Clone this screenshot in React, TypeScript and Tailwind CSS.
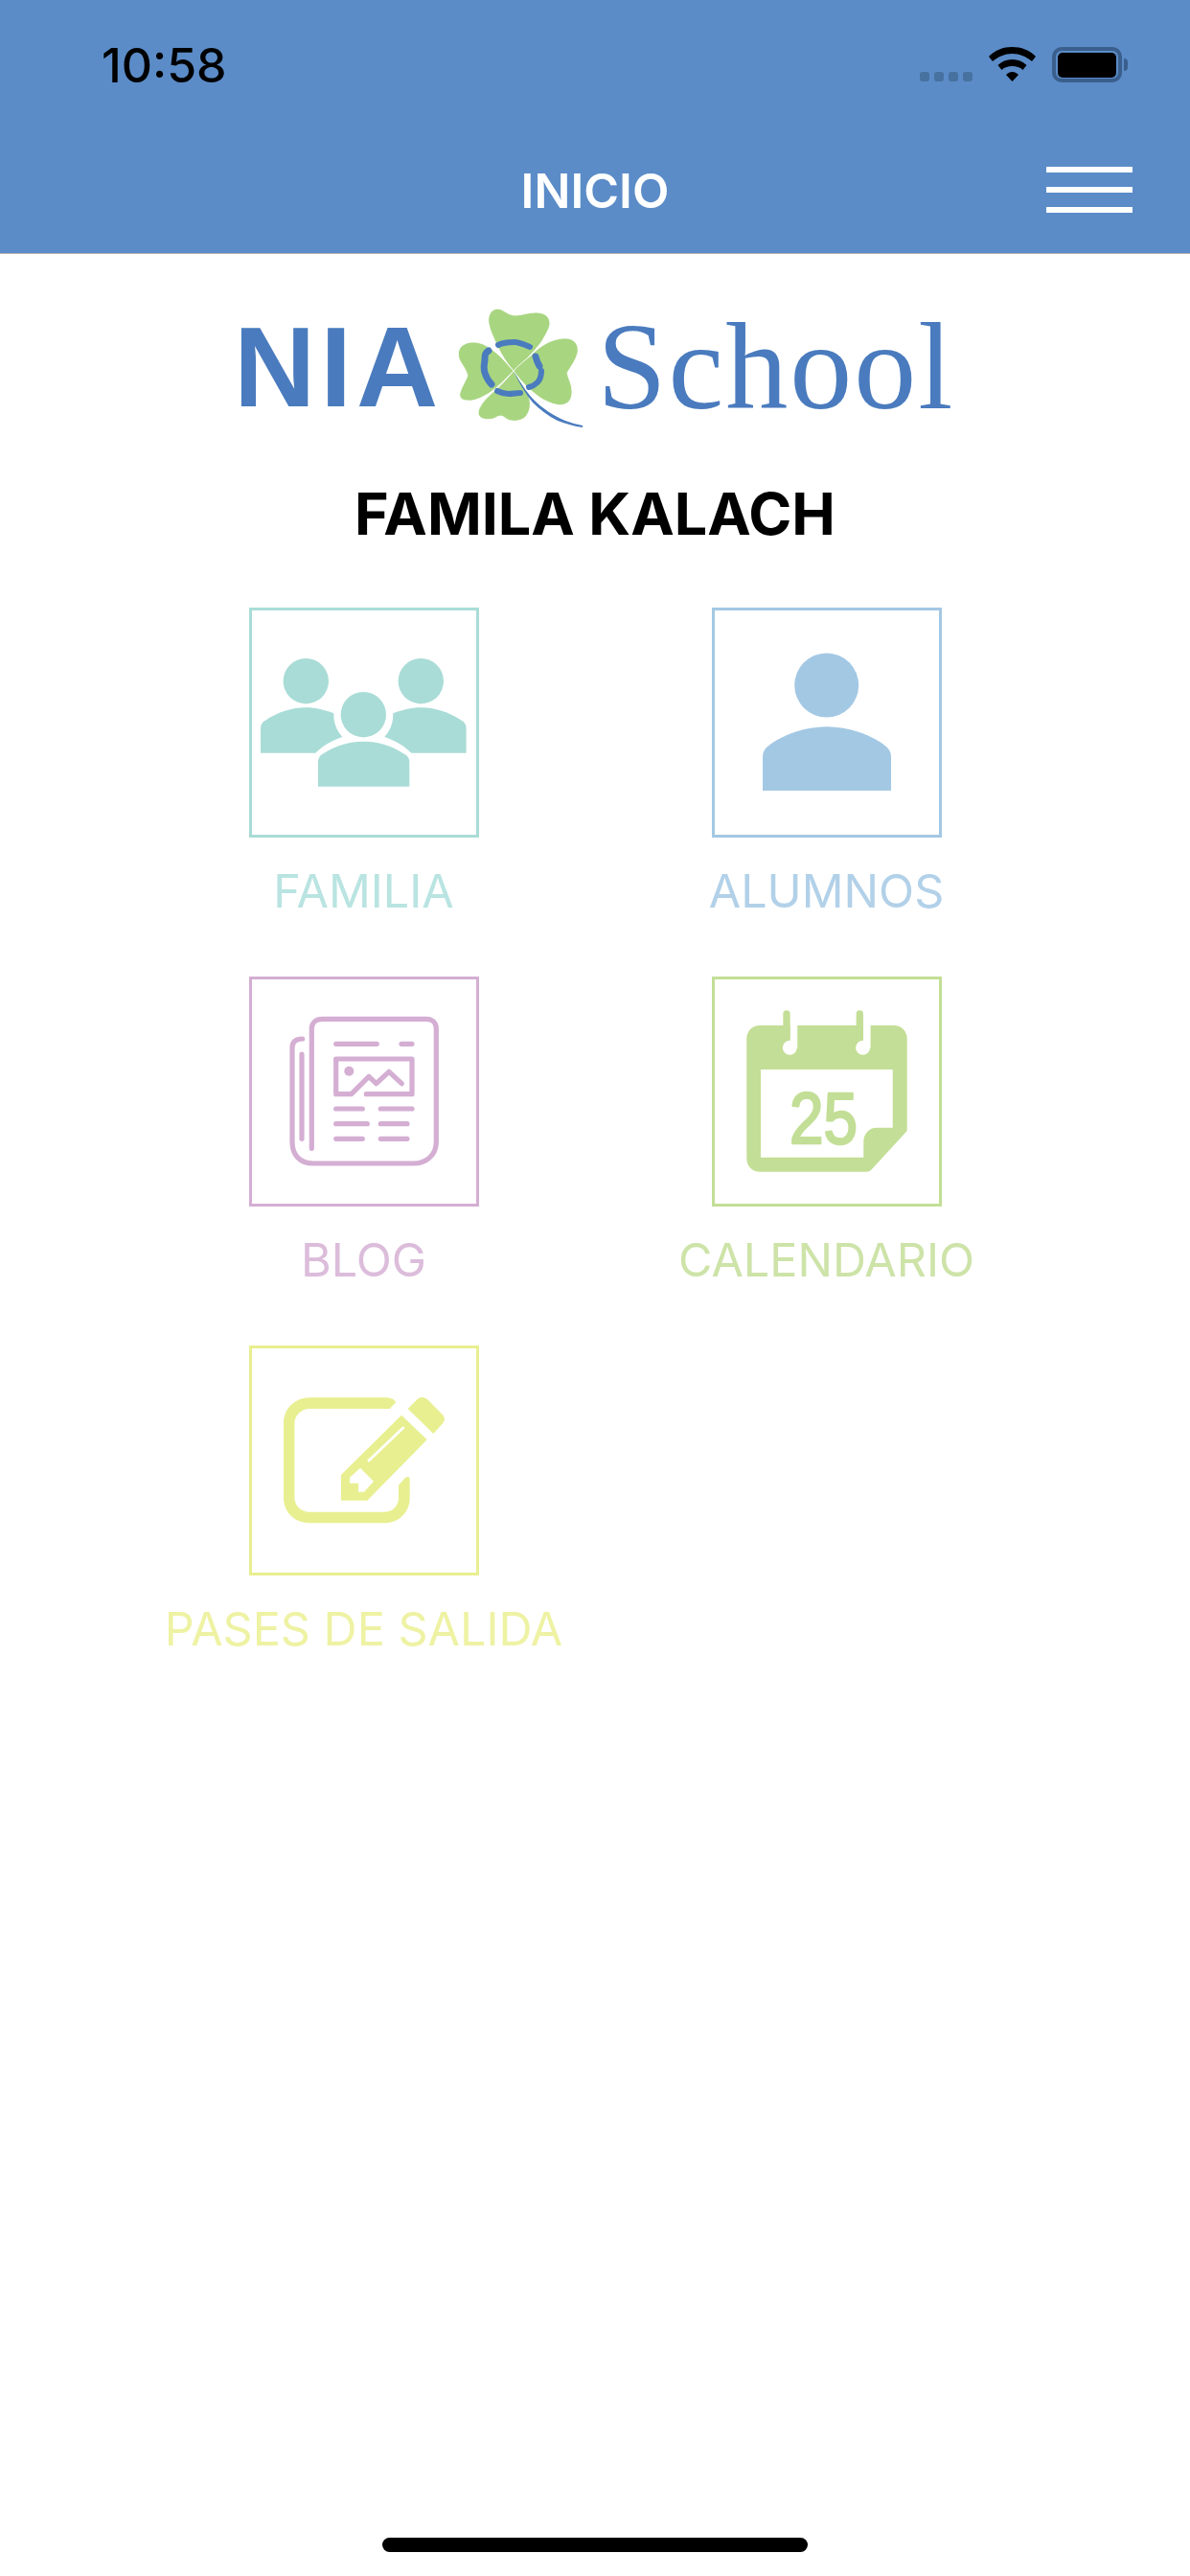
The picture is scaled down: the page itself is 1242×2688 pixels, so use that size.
const sans = "font-['Inter','Liberation_Sans',sans-serif]";

function StatusIcons() {
  return (
    <div className="flex items-end mt-[5px]">
      <div className="flex gap-[5px] mb-[1px] mr-[17px]">
        <span className="w-[10px] h-[10px] rounded-[3px] bg-[#47719f]" />
        <span className="w-[10px] h-[10px] rounded-[3px] bg-[#47719f]" />
        <span className="w-[10px] h-[10px] rounded-[3px] bg-[#47719f]" />
        <span className="w-[10px] h-[10px] rounded-[3px] bg-[#47719f]" />
      </div>
      <svg width="49" height="36" viewBox="0 0 49 36" className="mr-[17px] mb-[1px]">
        <path d="M24.5 36 18 29c4-4 9-4 13 0Z" fill="#000" />
        <path d="M24.500 13c6 0 11 2 15 6l-4 5c-3-3-7-4-11-4s-8 1-11 4l-4-5c4-4 9-6 15-6Z" fill="#000" />
        <path d="M24.500 0c9 0 18 3 24.500 10l-4 5C39 10 32 7 24.500 7S10 10 4 15L0 10C7 3 15 0 24.500 0Z" fill="#000" />
      </svg>
      <div className="flex items-center">
        <div className="w-[73px] h-[37px] rounded-[10px] border-4 border-[#3a5f8d] px-[2px] py-[1.5px]">
          <div className="w-full h-full rounded-[5px] bg-black" />
        </div>
        <div className="ml-[2px] w-[4px] h-[13px] rounded-r-[4px] bg-[#3a5f8d]" />
      </div>
    </div>
  );
}

function Clover() {
  return (
    <svg width="160" height="150" viewBox="0 0 160 150">
      <g fill="#a8d580" stroke="#ffffff" strokeWidth="0.800">
        <path d="M76 77C66 66 59 52 55 42 51 33 49 26 50 21 52 13 58 11 63 13 68 15 71 19 78 19 85 19 91 16 99 16 108 16 114 20 114 28 113 34 109 40 105 47 97 58 86 68 76 77Z" />
        <path d="M76 77C82 70 88 66 95 60 102 53 108 49 115 46 123 43 131 42 136 44 142 47 144 52 143 58 141 66 136 72 132 79 133 85 137 91 137 98 137 105 135 110 129 112 123 114 115 111 107 107 97 101 85 90 76 77Z" />
        <path d="M76 77C70 71 66 65 60 60 54 55 48 50 41 48 33 46 26 47 21 52 17 57 18 63 21 68 24 73 27 77 28 82 26 88 22 93 20 100 19 105 22 108 28 108 36 109 44 104 51 100 60 94 68 85 76 77Z" />
        <path d="M76 77C70 84 64 91 57 97 50 103 45 108 42 113 39 118 38 122 41 125 44 128 50 128 55 127 59 125 60 124 63 124 66 124 69 129 74 129 80 130 87 128 90 123 94 117 94 110 92 104 88 94 82 87 76 77Z" />
      </g>
      <g fill="none" stroke="#4a7bbe" strokeLinecap="round" strokeLinejoin="round">
        <path d="M60 50C66 47 72 47 77 47S88 50 93 52" strokeWidth="6" />
        <path d="M50 56C46 58 46 61 46 65S44 73 46 79 49 87 53 91" strokeWidth="7" />
        <path d="M99 62C100 66 101 69 103 72" strokeWidth="7" />
        <path d="M105 77C105 82 104 86 101 89S96 93 92 94" strokeWidth="6" />
        <path d="M59 98C63 100 67 101 71 101S79 100 83 100" strokeWidth="6" />
      </g>
      <path d="M76 77C84 91 90 100 98 108 106 116 118 124 130 129 136 131 142 133 148 134L148 136C140 135 130 132 122 129 112 124 103 117 96 110 88 100 82 90 76 77Z" fill="#4a7bbe" />
    </svg>
  );
}

function Family() {
  return (
    <svg width="234" height="234" viewBox="3 3 234 234" fill="#a9dcd6">
      <circle cx="59.3" cy="76.700" r="23.700" />
      <circle cx="179.300" cy="76.700" r="23.700" />
      <circle cx="119.300" cy="111.700" r="23.700" />
      <path d="M12 151.700V126C12 122 14 119 17 117.700 30 109 45 104.300 59.300 104.300 69 104.300 80 107 88.300 110.300 88 120 91 128 97.300 135 86 139 77 144 69.300 151.700Z" />
      <path d="M226.600 151.700V126C226.600 122 224.600 119 221.600 117.700 208.600 109 193.600 104.300 179.300 104.300 169.600 104.300 158.600 107 150.300 110.300 150.600 120 147.600 128 141.300 135 152.600 139 161.600 144 169.300 151.700Z" />
      <path d="M72 186.700V161C72 157 74 154 76.700 152.700 90 144 105 139.700 119.300 139.700 134 139.700 149 144 161.700 152.700 165 154 167.300 157 167.300 161V186.700Z" />
    </svg>
  );
}

function Student() {
  return (
    <svg width="234" height="234" viewBox="3 3 234 234" fill="#a3c8e4">
      <circle cx="119.700" cy="81" r="33.500" />
      <path d="M53 191V156C53 151 55 148 57 146 72 133 97 124.300 119.700 124.300 143 124.300 168 133 183 146 185 148 187 151 187 156V191Z" />
    </svg>
  );
}

function Blog() {
  return (
    <svg width="234" height="234" viewBox="3 3 234 234" fill="none" stroke="#d4aed3" strokeWidth="5.200" strokeLinecap="round" strokeLinejoin="round">
      <path d="M65.300 179.300V54.300C65.300 48 70 44.300 76.700 44.300H185C191 44.300 195.300 48 195.300 54.300V172.700C195.300 186 185 195 171.700 195H66.700C53 195 45 186 45 172.700V74.300C45 68 49 65 55.700 65" />
      <path d="M55 81V169.300" />
      <path d="M90.700 70.300H133.300M159 70.300H170" />
      <path d="M122.300 122.700H170V86H90.700V122.700H106.700L125 104.300 132.700 111.700 146 99.300 159.300 111.700" />
      <circle cx="104.300" cy="98.700" r="5" fill="#d4aed3" stroke="none" />
      <path d="M90.700 138H118.300M137.300 138H170M90.700 153.700H123.300M137.300 153.700H165M90.700 169.300H118.300M137.300 169.300H165" />
    </svg>
  );
}

function Calendar() {
  return (
    <svg width="234" height="234" viewBox="3 3 234 234">
      <path fill="#c3de96" fillRule="evenodd" d="M50.300 51H189.700C198 51 203.700 57 203.700 65V161L167 201C165 203 164 203.700 162 203.700H50.300C42 203.700 36.300 198 36.300 189.300V65C36.300 57 42 51 50.300 51ZM51 97V188.700H158.300V172.700C158.300 164 164 157.700 172 157.700H188.700V97Z" />
      <path fill="#ffffff" d="M81.700 51H89.300V74.300H81.700ZM158 51H165.600V74.300H158Z" />
      <circle cx="81.300" cy="74.300" r="7.500" fill="#ffffff" />
      <circle cx="157.600" cy="74.300" r="7.500" fill="#ffffff" />
      <path d="M78 39V63M154.300 39V63" fill="none" stroke="#c3de96" strokeWidth="7.300" strokeLinecap="round" />
      <text x="81" y="173.700" textLength="71" lengthAdjust="spacingAndGlyphs" fill="#c3de96" stroke="#c3de96" strokeWidth="2.500" strokeLinejoin="round" fontSize="76" className="font-['Liberation_Sans',sans-serif]">25</text>
    </svg>
  );
}

function Pass() {
  return (
    <svg width="234" height="234" viewBox="3 3 234 234" fill="#e8ef90">
      <path d="M141.700 54.300C146 54.300 151 55 153.300 59.300L146.700 66H63.300C54 66 47.300 73 47.300 82V157.700C47.300 167 54 173.700 63.300 173.700H141.700C150 173.700 156 167 156 159.300V145.700L163.300 137.700C165 136.500 167.700 137 167.700 139.300V159.300C167.700 174 156 185.300 141.700 185.300H63.300C48 185.300 36 174 36 159.300V81C36 66 48 54.300 63.300 54.300Z" />
      <path d="M159 72.700 185.700 98.300 123.300 161.700H96V135Z" />
      <path d="M116 127.700 130 141.700 120 152.700H114V143.700H105V137.700Z" fill="#ffffff" />
      <path d="M125 120 160.700 86" fill="none" stroke="#ffffff" strokeWidth="3" strokeLinecap="round" />
      <path d="M165.700 66 175 56.700C178 53 183 53 186.700 56.700L200.700 71C205 75 205 79 200.700 82.700L192.300 92Z" />
    </svg>
  );
}

const tiles = [
  { label: "FAMILIA", border: "border-[#a9dcd6]", text: "text-[#b9e4e1]", Icon: Family },
  { label: "ALUMNOS", border: "border-[#a3c8e4]", text: "text-[#b2d1e9]", Icon: Student },
  { label: "BLOG", border: "border-[#d4aed3]", text: "text-[#dcbcdb]", Icon: Blog },
  { label: "CALENDARIO", border: "border-[#c3de96]", text: "text-[#cde3a8]", Icon: Calendar },
  { label: "PASES DE SALIDA", border: "border-[#e8ef90]", text: "text-[#eef2a3]", Icon: Pass },
];

export default function App() {
  return (
    <div className={`w-[1242px] h-[2688px] flex flex-col bg-white ${sans}`}>
      <header className="h-[265px] bg-[#5b8cc8] border-b border-[#b0b0b0] flex flex-col">
        <div className="h-[136px] pl-[106px] pr-[65px] pt-[44px] flex items-start justify-between">
          <span className="text-[50px] leading-[48px] font-medium text-black">10:58</span>
          <StatusIcons />
        </div>
        <div className="px-[60px] flex justify-between items-start">
          <div className="w-[90px]" />
          <span className="mt-[34px] text-[50px] leading-[58px] font-semibold text-white">INICIO</span>
          <div className="mt-[38px] w-[90px] flex flex-col gap-[15px]">
            <span className="h-[6px] bg-white" />
            <span className="h-[6px] bg-white" />
            <span className="h-[6px] bg-white" />
          </div>
        </div>
      </header>

      <div className="mt-[50px] pl-[244px] h-[150px] flex items-start">
        <span className="font-['Liberation_Sans',sans-serif] font-bold text-[118px] tracking-[5px] leading-[136px] text-[#4a7bbe]">NIA</span>
        <div className="-ml-[2px] -mt-[5px]">
          <Clover />
        </div>
        <span className="ml-[3px] -mt-[1px] font-['Liberation_Serif',serif] text-[130px] tracking-[2px] leading-[136px] text-[#4a7bbe]">School</span>
      </div>

      <h1 className="mt-[35px] text-center text-[61px] leading-[72px] font-bold text-black">FAMILA KALACH</h1>

      <div className="mt-[62px] mx-auto w-[966px] grid grid-cols-2 auto-rows-[385px]">
        {tiles.map(({ label, border, text, Icon }) => (
          <div key={label} className="flex flex-col items-center">
            <div className={`w-[240px] h-[240px] border-[3px] ${border} flex items-center justify-center`}>
              <Icon />
            </div>
            <span className={`mt-[28px] text-[48.5px] leading-[56px] whitespace-nowrap ${text}`}>{label}</span>
          </div>
        ))}
      </div>

      <div className="mt-auto mb-[25px] mx-auto w-[444px] h-[15px] rounded-full bg-black" />
    </div>
  );
}
